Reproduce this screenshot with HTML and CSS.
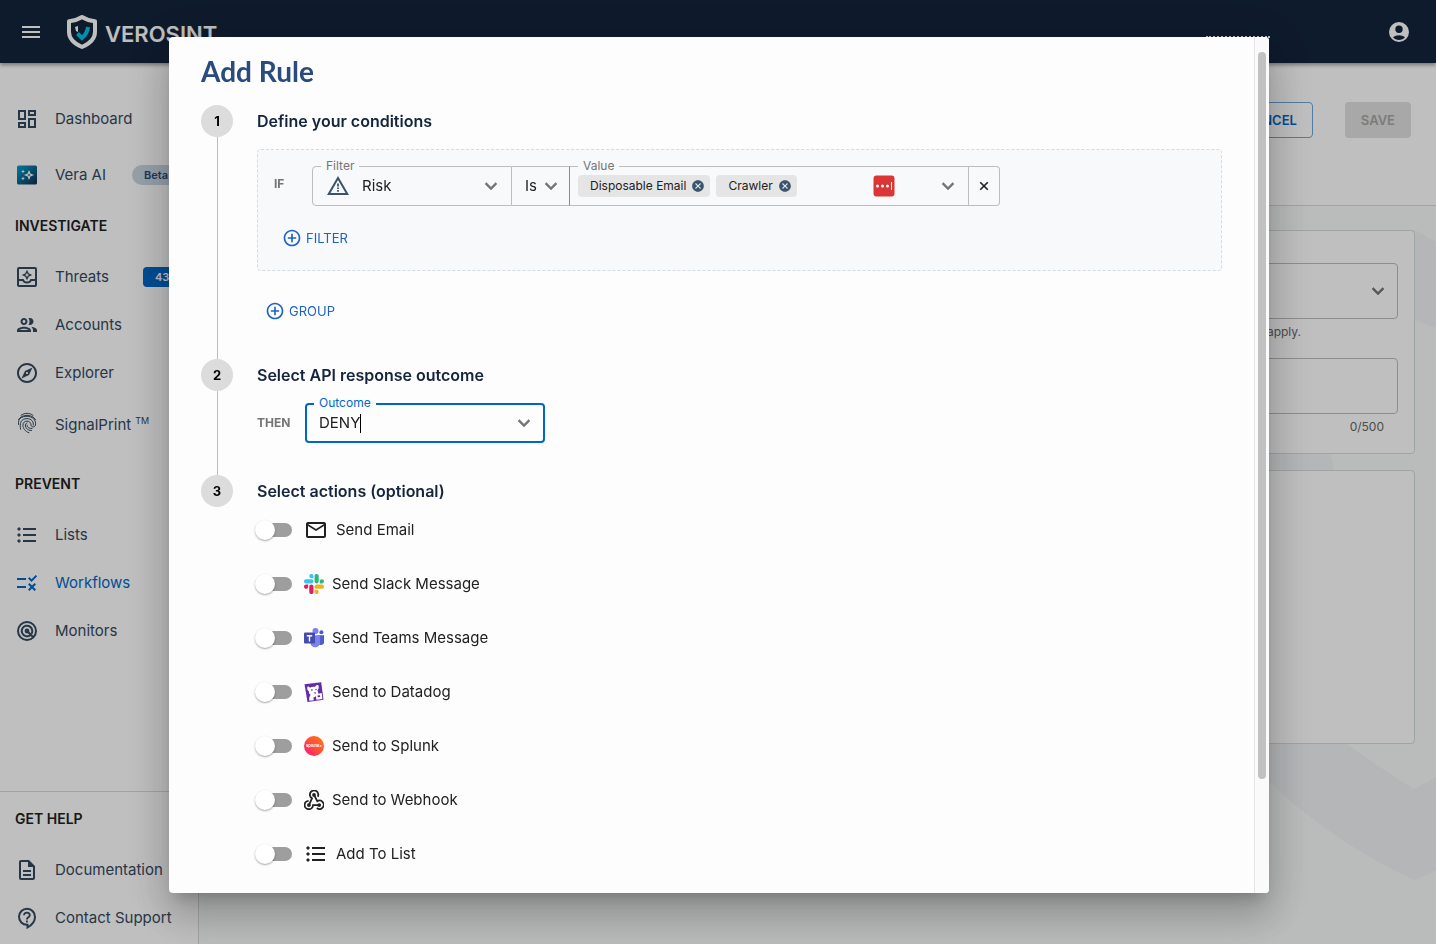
FILE: index.html
```html
<!DOCTYPE html>
<html lang="en">
<head>
    <meta charset="UTF-8">
    <meta name="viewport" content="width=device-width, initial-scale=1.0">
    <title>Verosint - Workflows</title>
    <link rel="stylesheet" href="styles.css">
</head>
<body>
    <!-- shared icons -->
    <svg class="sprite" aria-hidden="true">
        <symbol id="chevron" viewBox="0 0 24 24"><path d="M7.41 8.59 12 13.17l4.59-4.58L18 10l-6 6-6-6z" fill="currentColor" stroke="currentColor" stroke-width=".5"/></symbol>
        <symbol id="plus-circle" viewBox="0 0 24 24"><path d="M13 7h-2v4H7v2h4v4h2v-4h4v-2h-4V7zm-1-5C6.48 2 2 6.48 2 12s4.48 10 10 10 10-4.48 10-10S17.52 2 12 2zm0 18c-4.41 0-8-3.59-8-8s3.59-8 8-8 8 3.59 8 8-3.59 8-8 8z" fill="currentColor"/></symbol>
        <symbol id="close-circle" viewBox="0 0 24 24"><path d="M12 2C6.47 2 2 6.47 2 12s4.47 10 10 10 10-4.47 10-10S17.53 2 12 2zm5 13.59L15.59 17 12 13.41 8.41 17 7 15.59 10.59 12 7 8.41 8.41 7 12 10.59 15.59 7 17 8.41 13.41 12 17 15.59z" fill="currentColor"/></symbol>
        <symbol id="list" viewBox="0 0 24 24"><path d="M8 5h13v2H8zM8 11h13v2H8zM8 17h13v2H8z" fill="currentColor"/><path d="M4 4.2 5.8 6 4 7.8 2.200 6zM4 10.200 5.800 12 4 13.800 2.200 12zM4 16.200 5.800 18 4 19.800 2.200 18z" fill="currentColor" stroke="currentColor" stroke-width=".4"/></symbol>
    </svg>

    <header class="topbar">
        <button class="icon-button" type="button" aria-label="Menu">
            <svg width="24" height="24" viewBox="0 0 24 24"><path d="M3 18h18v-2H3v2zm0-5h18v-2H3v2zm0-7v2h18V6H3z" fill="currentColor"/></svg>
        </button>
        <a class="brand" href="#">
            <svg width="30" height="34" viewBox="0 0 30 34">
                <path d="M15 2C11 4.500 7 6 2 6.200V17c0 6.500 5 11.500 13 15 8-3.500 13-8.500 13-15V6.200C23 6 19 4.500 15 2z" fill="none" stroke="#fff" stroke-width="4" stroke-linejoin="round"/>
                <path d="M8 12c1-.2 2-.6 3-1v6l-2-1z" fill="#fff"/>
                <path d="M10.500 18.500l4.500 4.500c3.500-3 5.500-6 6-11" fill="none" stroke="#00bfe8" stroke-width="4"/>
            </svg>
            <span>VEROSINT</span>
        </a>
        <span class="workspace"></span>
        <button class="icon-button" type="button" aria-label="Account">
            <svg width="24" height="24" viewBox="0 0 24 24"><path fill-rule="evenodd" d="M12 2a10 10 0 1 0 0 20 10 10 0 0 0 0-20zm0 3.500a3.700 3.700 0 1 1 0 7.400 3.700 3.700 0 0 1 0-7.400zM12 20c-2.400 0-4.500-1-6-2.700 1.500-1.300 3.700-2 6-2s4.500.7 6 2C16.500 19 14.400 20 12 20z" fill="currentColor"/></svg>
        </button>
    </header>

    <div class="layout">
        <nav class="sidebar">
            <a class="nav-item nav-top" href="#">
                <svg width="24" height="24" viewBox="0 0 24 24"><path d="M19 5v2h-4V5h4M9 5v6H5V5h4m10 8v6h-4v-6h4M9 17v2H5v-2h4M21 3h-8v6h8V3zM11 3H3v10h8V3zm10 8h-8v10h8V11zm-10 4H3v6h8v-6z" fill="currentColor"/></svg>
                Dashboard
            </a>
            <a class="nav-item" href="#">
                <svg width="24" height="24" viewBox="0 0 24 24">
                    <defs><linearGradient id="vera" x1="0" y1="0" x2="1" y2="1"><stop offset="0" stop-color="#00a3cf"/><stop offset="1" stop-color="#16294f"/></linearGradient></defs>
                    <rect x="2" y="2.500" width="20" height="19" rx="1.500" fill="url(#vera)"/>
                    <path d="M14 8.500l1 2.500 2.500 1-2.500 1-1 2.500-1-2.500-2.500-1 2.500-1z" fill="none" stroke="#fff" stroke-width="1.200"/>
                    <path d="M8 6.500l.6 1.400 1.400.6-1.400.6L8 10.500l-.6-1.400L6 8.500l1.400-.6zM8 13.500l.6 1.400 1.400.6-1.400.6L8 17.500l-.6-1.400-1.400-.6 1.400-.6z" fill="#fff"/>
                </svg>
                Vera AI
                <span class="tag">Beta</span>
            </a>

            <h2 class="nav-heading">INVESTIGATE</h2>
            <a class="nav-item" href="#">
                <svg width="24" height="24" viewBox="0 0 24 24" fill="none" stroke="currentColor" stroke-width="2"><rect x="3" y="3" width="18" height="18" rx="1"/><path d="M3 15h5c.7 1.800 2 2.600 4 2.600s3.300-.8 4-2.600h5"/><path d="M12 6.300l1.200 2.500 2.500 1.200-2.500 1.200-1.200 2.500-1.200-2.500L8.300 10l2.500-1.200z" stroke-width="1.400"/></svg>
                Threats
                <span class="count">43</span>
            </a>
            <a class="nav-item" href="#">
                <svg width="24" height="24" viewBox="0 0 24 24"><path d="M9 13.750c-2.340 0-7 1.170-7 3.500V19h14v-1.750c0-2.330-4.660-3.500-7-3.500zM4.340 17c.84-.58 2.870-1.250 4.660-1.250s3.820.67 4.660 1.250H4.340zM9 12c1.930 0 3.500-1.570 3.500-3.500S10.930 5 9 5 5.500 6.570 5.500 8.500 7.070 12 9 12zm0-5c.83 0 1.500.67 1.500 1.500S9.830 10 9 10s-1.500-.67-1.500-1.500S8.170 7 9 7zm7.040 6.810c1.160.84 1.960 1.960 1.960 3.440V19h4v-1.750c0-2.020-3.500-3.170-5.960-3.440zM15 12c1.930 0 3.500-1.570 3.500-3.500S16.930 5 15 5c-.54 0-1.040.13-1.500.35.63.89 1 1.980 1 3.150s-.37 2.260-1 3.150c.46.22.96.35 1.500.35z" fill="currentColor"/></svg>
                Accounts
            </a>
            <a class="nav-item" href="#">
                <svg width="24" height="24" viewBox="0 0 24 24"><path d="M12 2C6.480 2 2 6.480 2 12s4.480 10 10 10 10-4.480 10-10S17.520 2 12 2zm0 18c-4.410 0-8-3.590-8-8s3.590-8 8-8 8 3.590 8 8-3.590 8-8 8zm-5.500-2.500l7.510-3.490L17.500 6.500 9.990 9.990 6.500 17.500zm5.500-6.600c.61 0 1.100.49 1.100 1.100s-.49 1.100-1.100 1.100-1.100-.49-1.100-1.100.49-1.100 1.100-1.100z" fill="currentColor"/></svg>
                Explorer
            </a>
            <a class="nav-item nav-tall" href="#">
                <svg width="24" height="24" viewBox="0 0 24 24" fill="none" stroke="currentColor" stroke-width="1" stroke-linecap="round">
                    <path d="M6 4.300C9.500 1.600 14.500 1.600 18 4.300M3.500 8.500C7 2.800 17 2.800 20.500 8.500M3.600 13.500C2.500 7.500 7 5.300 12 5.300s9.500 3.500 8.400 8.900c-.6 2.300-4 2.300-4.300 0-.3-5.500-8.200-5.400-8.200 0 .1 3 2.200 6.500 6 7.500M5.600 18.200C4.200 12.500 6 7.600 12 7.600c4.500 0 7 3.500 6.300 6.500M12 11.900c-3.500 1-1.500 8 4.500 7.600M12 14.200c.2 2 2 3.500 5 3.300"/>
                </svg>
                <span>SignalPrint<sup>TM</sup></span>
            </a>

            <h2 class="nav-heading">PREVENT</h2>
            <a class="nav-item" href="#">
                <svg width="24" height="24"><use href="#list"/></svg>
                Lists
            </a>
            <a class="nav-item active" href="#">
                <svg width="24" height="24" viewBox="0 0 24 24"><path d="M16.540 11L13 7.460l1.410-1.410 2.120 2.120 4.240-4.240 1.410 1.410L16.540 11zM11 7H2v2h9V7zM21 13.410L19.590 12 17 14.590 14.410 12 13 13.410 15.590 16 13 18.590 14.410 20 17 17.410 19.590 20 21 18.590 18.410 16 21 13.410zM11 15H2v2h9v-2z" fill="currentColor"/></svg>
                Workflows
            </a>
            <a class="nav-item" href="#">
                <svg width="24" height="24" viewBox="0 0 24 24" fill="none" stroke="currentColor" stroke-width="2"><circle cx="12" cy="12" r="9"/><path d="M15.200 16.200A5.300 5.300 0 1 1 17.300 12c0 1-.3 2-.8 2.800M12 12l6.500 6.500"/><circle cx="12" cy="12" r="1.400"/></svg>
                Monitors
            </a>

            <div class="nav-help">
                <h2 class="nav-heading">GET HELP</h2>
                <a class="nav-item" href="#">
                    <svg width="24" height="24" viewBox="0 0 24 24"><path d="M8 16h8v2H8zm0-4h8v2H8zm6-10H6c-1.100 0-2 .9-2 2v16c0 1.100.890 2 1.990 2H18c1.100 0 2-.9 2-2V8l-6-6zm4 18H6V4h7v5h5v11z" fill="currentColor"/></svg>
                    Documentation
                </a>
                <a class="nav-item" href="#">
                    <svg width="24" height="24" viewBox="0 0 24 24" fill="none" stroke="currentColor" stroke-width="2"><path d="M12.500 18.800V21.500C17 19 20 15.200 20 11A8 8 0 1 0 12 18.800z"/><path d="M9 9.300c0-3.600 5.800-3.500 5.800 0 0 2-2.900 2.100-2.900 4.100M11.900 14.500v2" stroke-width="1.800"/></svg>
                    Contact Support
                </a>
            </div>
        </nav>

        <main class="page">
            <div class="page-toolbar">
                <button class="button outlined" type="button">CANCEL</button>
                <button class="button disabled" type="button" disabled>SAVE</button>
            </div>
            <div class="page-body">
                <svg class="watermark" width="246" height="738" viewBox="1190 206 246 738" aria-hidden="true"><path d="M1436 242 1415 230Q1300 260 1200 330V600Q1215 745 1269 782Q1333 842 1414 880L1436 871V777L1414 789Q1380 768 1347 744Q1340 500 1331 454L1332 360Q1370 320 1415 320L1436 328z"/></svg>
                <section class="card">
                    <select class="field" aria-label="Workflow type"><option></option></select>
                    <svg class="field-arrow" width="24" height="24"><use href="#chevron"/></svg>
                    <p class="hint">Select the event type to which this workflow will apply.</p>
                    <input class="field" type="text" aria-label="Description">
                    <p class="hint counter">0/500</p>
                </section>
                <section class="card card-rules"></section>
            </div>
        </main>
    </div>

    <div class="backdrop">
        <div class="modal" role="dialog" aria-labelledby="modal-title">
            <form class="modal-content">
                <h1 id="modal-title">Add Rule</h1>

                <div class="step">
                    <div class="rail"><span class="step-number">1</span></div>
                    <div class="step-body">
                        <h2>Define your conditions</h2>
                        <div class="group">
                            <div class="condition">
                                <span class="keyword">IF</span>
                                <div class="combo combo-filter">
                                    <label for="filter">Filter</label>
                                    <svg width="24" height="24" viewBox="0 0 24 24"><path d="M12 5.990 19.530 19H4.470L12 5.990M12 2 1 21h22L12 2z" fill="currentColor"/><path d="M11.100 9.500h1.800v3h-1.800zM11.100 13.500h1.800v1.500h-1.800zM11.100 16h1.800v1.800h-1.800z" fill="currentColor"/></svg>
                                    <select id="filter"><option>Risk</option></select>
                                    <svg class="arrow" width="24" height="24"><use href="#chevron"/></svg>
                                </div>
                                <div class="combo combo-operator">
                                    <select aria-label="Operator"><option>Is</option></select>
                                    <svg class="arrow" width="24" height="24"><use href="#chevron"/></svg>
                                </div>
                                <div class="combo combo-value">
                                    <label for="value">Value</label>
                                    <span class="chip">Disposable Email<button type="button" aria-label="Remove Disposable Email"><svg width="14" height="14"><use href="#close-circle"/></svg></button></span>
                                    <span class="chip">Crawler<button type="button" aria-label="Remove Crawler"><svg width="14" height="14"><use href="#close-circle"/></svg></button></span>
                                    <input id="value" type="text">
                                    <svg width="22" height="22" viewBox="0 0 22 22"><rect x=".5" y=".5" width="21" height="21" rx="3" fill="#dc3535"/><g fill="#fff"><circle cx="4.500" cy="11" r="1.500"/><circle cx="9.500" cy="11" r="1.500"/><circle cx="14.500" cy="11" r="1.500"/><path d="M18 7h1v8h-1z"/></g></svg>
                                    <svg class="arrow" width="24" height="24"><use href="#chevron"/></svg>
                                </div>
                                <button class="remove" type="button" aria-label="Remove filter">
                                    <svg width="14" height="14" viewBox="0 0 24 24"><path d="M5.500 5.500l13 13M18.500 5.500l-13 13" stroke="currentColor" stroke-width="2.800"/></svg>
                                </button>
                            </div>
                            <button class="link-button" type="button"><svg width="20" height="20"><use href="#plus-circle"/></svg>FILTER</button>
                        </div>
                        <button class="link-button" type="button"><svg width="20" height="20"><use href="#plus-circle"/></svg>GROUP</button>
                    </div>
                </div>

                <div class="step">
                    <div class="rail"><span class="step-number">2</span></div>
                    <div class="step-body">
                        <h2>Select API response outcome</h2>
                        <div class="outcome">
                            <span class="keyword">THEN</span>
                            <div class="combo combo-outcome">
                                <label for="outcome">Outcome</label>
                                <input id="outcome" type="text" value="DENY">
                                <span class="caret"></span>
                                <svg class="arrow" width="24" height="24"><use href="#chevron"/></svg>
                            </div>
                        </div>
                    </div>
                </div>

                <div class="step">
                    <div class="rail"><span class="step-number">3</span></div>
                    <div class="step-body">
                        <h2>Select actions (optional)</h2>
                        <div class="actions">
                            <label class="action"><input type="checkbox" role="switch">
                                <svg width="24" height="24" viewBox="0 0 24 24"><path d="M22 6c0-1.100-.9-2-2-2H4c-1.100 0-2 .9-2 2v12c0 1.100.9 2 2 2h16c1.100 0 2-.9 2-2V6zm-2 0-8 5-8-5h16zm0 12H4V8l8 5 8-5v10z" fill="currentColor"/></svg>
                                Send Email</label>
                            <label class="action"><input type="checkbox" role="switch">
                                <svg width="20" height="20" viewBox="0 0 122.800 122.800"><path d="M25.800 77.600c0 7.100-5.800 12.900-12.900 12.900S0 84.700 0 77.600s5.800-12.900 12.900-12.900h12.900v12.900zm6.500 0c0-7.100 5.800-12.900 12.900-12.900s12.900 5.800 12.900 12.900v32.300c0 7.100-5.800 12.900-12.900 12.900s-12.900-5.800-12.900-12.900V77.600z" fill="#e01e5a"/><path d="M45.200 25.800c-7.100 0-12.900-5.800-12.900-12.900S38.100 0 45.200 0s12.900 5.800 12.900 12.900v12.900H45.200zm0 6.500c7.100 0 12.900 5.800 12.900 12.900s-5.800 12.900-12.900 12.900H12.900C5.800 58.100 0 52.300 0 45.200s5.800-12.900 12.900-12.900h32.300z" fill="#36c5f0"/><path d="M97 45.200c0-7.100 5.800-12.900 12.900-12.900s12.900 5.800 12.900 12.900-5.800 12.900-12.900 12.900H97V45.200zm-6.500 0c0 7.100-5.800 12.900-12.900 12.900s-12.900-5.800-12.900-12.900V12.900C64.700 5.800 70.500 0 77.600 0s12.900 5.800 12.900 12.900v32.300z" fill="#2eb67d"/><path d="M77.600 97c7.100 0 12.900 5.800 12.900 12.900s-5.800 12.900-12.900 12.900-12.900-5.800-12.900-12.900V97h12.900zm0-6.500c-7.100 0-12.900-5.800-12.900-12.900s5.800-12.900 12.900-12.900h32.300c7.100 0 12.900 5.800 12.900 12.900s-5.800 12.900-12.900 12.900H77.600z" fill="#ecb22e"/></svg>
                                Send Slack Message</label>
                            <label class="action"><input type="checkbox" role="switch">
                                <svg width="20" height="20" viewBox="0 0 20 20"><circle cx="17.400" cy="4.200" r="2" fill="#5059c9"/><path d="M14 7.200h6v6.300a3 3 0 0 1-6 1z" fill="#5059c9"/><circle cx="11.500" cy="3" r="3" fill="#7b83eb"/><path d="M6.500 7.200h9.700v7.600a5 5 0 0 1-9.700 1z" fill="#7b83eb"/><rect y="4.500" width="11" height="11" rx="1" fill="#444cb0"/><path d="M2.800 7h5.400v1.400H6.200v5H4.800v-5h-2z" fill="#fff"/></svg>
                                Send Teams Message</label>
                            <label class="action"><input type="checkbox" role="switch">
                                <svg width="20" height="20" viewBox="0 0 20 20"><path d="M.5 2.200 17.200.2 19.500 17.800 3.500 20z" fill="#632ca6"/><path d="M3.500 4.500c1.500 0 2 .5 2.500 1.200 1.500-1 3.500-1 5-.7.500-1.500 2.500-2.500 3.500-1.500.5 2 .2 3.500-1 5l1 3.200 3.200-.6.700 5.800-6 .8-.5-3.500-2.600 1.500.6 2.600-4.500.5c-.7-2.500 0-4.500 1.400-6-1.700-.5-2-2-1.800-3.300C3.500 8.500 2.700 6.500 3.500 4.500z" fill="#fff"/><path d="M7 7.500l1.500-.3.200 1.300-1.500.2zM11.300 7l1.200-.2.200 1.300-1.200.1zM9.500 10.800l2.500-.6-.5 1.800zM13.500 13.500l2.500-.3.200 1.700-2.500.3z" fill="#632ca6"/></svg>
                                Send to Datadog</label>
                            <label class="action"><input type="checkbox" role="switch">
                                <svg width="20" height="20" viewBox="0 0 20 20"><defs><linearGradient id="splunk" x1="0" y1="1" x2="1" y2="0"><stop offset="0" stop-color="#ff0f8c"/><stop offset=".45" stop-color="#ff4b3a"/><stop offset="1" stop-color="#ff7a1a"/></linearGradient></defs><circle cx="10" cy="10" r="10" fill="url(#splunk)"/><text class="splunk-name" x="10" y="11" text-anchor="middle">splunk&gt;</text></svg>
                                Send to Splunk</label>
                            <label class="action"><input type="checkbox" role="switch">
                                <svg width="20" height="20" viewBox="0 0 20 20" fill="none" stroke="currentColor" stroke-width="1.800"><path d="M13.700 6.800A4.200 4.200 0 1 0 8 8.300L5 14.800"/><path d="M4.600 10.800A4.200 4.200 0 1 0 9 15.200h6.300"/><path d="M10 4.800l3.300 6.400a4.200 4.200 0 1 1-.5 6.800"/><g fill="currentColor" stroke="none"><circle cx="10" cy="4.900" r="1.900"/><circle cx="4.900" cy="15.100" r="1.900"/><circle cx="15.200" cy="15.100" r="1.900"/></g></svg>
                                Send to Webhook</label>
                            <label class="action"><input type="checkbox" role="switch">
                                <svg width="24" height="24"><use href="#list"/></svg>
                                Add To List</label>
                        </div>
                    </div>
                </div>
            </form>
            <div class="scrollbar"><div class="thumb"></div></div>
        </div>
    </div>
</body>
</html>
```
FILE: styles.css
```css
* {
    box-sizing: border-box;
}

body {
    margin: 0;
    height: 100vh;
    display: flex;
    flex-direction: column;
    overflow: hidden;
    font-family: Inter, "Liberation Sans", sans-serif;
    font-size: 15px;
    line-height: 24px;
    color: #212121;
    background-color: #f7fbf9;
}

h1, h2, p {
    margin: 0;
}

a {
    color: inherit;
    text-decoration: none;
}

button, input, select {
    font: inherit;
    color: inherit;
}

button {
    padding: 0;
    border: none;
    background: none;
    cursor: pointer;
}

svg {
    flex-shrink: 0;
}

.sprite {
    position: absolute;
    width: 0;
    height: 0;
}

/* top bar */
.topbar {
    position: relative;
    z-index: 1;
    display: flex;
    align-items: center;
    flex-shrink: 0;
    height: 63px;
    padding: 0 25px 0 19px;
    color: #fff;
    background-color: #13243c;
    box-shadow: 0 2px 4px rgba(0, 0, 0, 0.4);
}

.icon-button {
    display: flex;
}

.brand {
    display: flex;
    align-items: center;
    gap: 8px;
    margin-left: 24px;
    font-size: 22px;
    font-weight: 600;
}

.brand span {
    padding-top: 4px;
}

.workspace {
    width: 64px;
    height: 2px;
    margin: 10px 117px 0 auto;
    border-top: 2px dotted #fff;
}

/* layout */
.layout {
    display: flex;
    flex: 1;
    min-height: 0;
}

.sidebar {
    display: flex;
    flex-direction: column;
    flex-shrink: 0;
    width: 199px;
    padding: 32px 0 2px;
    border-right: 1px solid #d5dbdb;
    background-color: #fff;
}

.nav-item {
    display: flex;
    align-items: center;
    gap: 16px;
    height: 48px;
    padding-left: 15px;
    color: #34495e;
    white-space: nowrap;
}

.nav-top {
    margin-bottom: 8px;
}

.nav-tall {
    height: 52px;
    margin-bottom: 8px;
}

.nav-item.active {
    color: #0067c8;
}

.nav-item sup {
    margin-left: 4px;
    font-size: 9px;
    line-height: 24px;
    vertical-align: 6px;
}

.nav-heading {
    padding-left: 15px;
    font-size: 14px;
    font-weight: 600;
    line-height: 54px;
}

.nav-help {
    margin-top: auto;
    border-top: 1px solid #d5dbdb;
}

.tag, .count {
    height: 20px;
    padding: 0 12px;
    font-size: 11px;
    font-weight: 600;
    line-height: 20px;
}

.tag {
    margin-left: 10px;
    border-radius: 10px;
    color: #26477c;
    background-color: #c8d6e2;
}

.count {
    margin-left: 18px;
    border-radius: 4px;
    color: #fff;
    background-color: #0067c8;
}

.page {
    display: flex;
    flex-direction: column;
    flex: 1;
    min-width: 0;
}

.page-toolbar {
    display: flex;
    justify-content: flex-end;
    gap: 32px;
    padding: 39px 25px 67px;
    border-bottom: 1px solid #d5dbdb;
    background-color: #fff;
}

.button {
    height: 36px;
    padding: 0 15px;
    border: 1px solid transparent;
    border-radius: 4px;
    font-size: 13px;
    font-weight: 600;
}

.outlined {
    border-color: #6ea6de;
    color: #0067c8;
}

.disabled {
    color: #a6a6a6;
    background-color: #e0e0e0;
}

.page-body {
    position: relative;
    display: flex;
    flex-direction: column;
    gap: 16px;
    flex: 1;
    padding: 24px 21px;
    overflow: hidden;
}

.watermark {
    position: absolute;
    top: 0;
    right: 0;
    fill: #f1f3f6;
}

.card {
    position: relative;
    padding: 32px 16px 16px;
    border: 1px solid #d5dbdb;
    border-radius: 4px;
    background-color: #fff;
}

.card-rules {
    height: 274px;
}

.field {
    display: block;
    width: 100%;
    height: 56px;
    padding: 0 14px;
    border: 1px solid #bdbdbd;
    border-radius: 4px;
    background: #fff;
    appearance: none;
}

.field-arrow {
    position: absolute;
    top: 48px;
    right: 24px;
    color: #757575;
}

.hint {
    padding: 3px 14px 0;
    margin-bottom: 16px;
    font-size: 12px;
    line-height: 20px;
    color: #666;
    text-align: right;
}

.card .hint:first-of-type {
    padding-right: 97px;
}

.card .counter {
    margin-bottom: 0;
}

/* dialog */
.backdrop {
    position: fixed;
    inset: 0;
    z-index: 2;
    padding: 37px 167px 51px 169px;
    background-color: rgba(0, 0, 0, 0.25);
}

.modal {
    display: flex;
    height: 100%;
    overflow: hidden;
    border-radius: 4px;
    background-color: #fdfdfd;
    box-shadow: 0 11px 15px -7px rgba(0, 0, 0, 0.2), 0 24px 38px 3px rgba(0, 0, 0, 0.14), 0 9px 46px 8px rgba(0, 0, 0, 0.12);
}

.modal-content {
    flex: 1;
    min-width: 0;
    padding: 16px 32px 0;
    overflow: hidden;
}

.scrollbar {
    width: 15px;
    padding: 15px 3px 0;
    border-left: 1px solid #e5e5e5;
    background-color: #fafafa;
}

.thumb {
    width: 8px;
    height: calc(100% - 114px);
    border-radius: 4px;
    background-color: #c1c1c1;
}

h1 {
    margin-bottom: 16px;
    font-family: Lato, sans-serif;
    font-size: 28px;
    font-weight: 700;
    line-height: 36px;
    color: #294b7d;
}

.step {
    display: flex;
    gap: 24px;
}

.rail {
    display: flex;
    flex-direction: column;
    align-items: center;
    width: 32px;
}

.rail::after {
    content: "";
    flex: 1;
    width: 1px;
    background-color: #bdbdbd;
}

.step:last-child .rail::after {
    display: none;
}

.step-number {
    width: 32px;
    border-radius: 50%;
    font-size: 13px;
    font-weight: 700;
    line-height: 32px;
    text-align: center;
    color: #000;
    background-color: #dcdcdc;
}

.step-body {
    flex: 1;
    min-width: 0;
    padding-bottom: 32px;
}

.step-body h2 {
    font-size: 16px;
    font-weight: 600;
    line-height: 32px;
    color: #13243c;
}

.group {
    margin: 12px 0 24px;
    padding: 16px;
    border: 1px dashed #d3dce3;
    border-radius: 4px;
    background-color: #f8f9fb;
}

.condition {
    display: flex;
    margin-bottom: 16px;
}

.keyword {
    font-size: 12px;
    font-weight: 700;
    color: #757575;
}

.condition .keyword {
    width: 38px;
    line-height: 36px;
}

.combo {
    position: relative;
    display: flex;
    align-items: center;
    height: 40px;
    border: 1px solid #bdbdbd;
}

.combo label {
    position: absolute;
    top: -9px;
    left: 8px;
    padding: 0 5px;
    font-size: 12px;
    line-height: 16px;
    color: #757575;
    background-color: #f8f9fb;
}

.combo select, .combo input {
    min-width: 0;
    padding: 0;
    border: none;
    outline: none;
    background: none;
    appearance: none;
}

.arrow {
    color: #757575;
}

.combo-filter {
    gap: 12px;
    width: 200px;
    padding: 0 8px 0 13px;
    border-radius: 4px 0 0 4px;
    color: #3b536b;
}

.combo-filter select, .combo-operator select {
    flex: 1;
    color: #212121;
}

.combo-operator {
    width: 58px;
    padding: 0 6px 0 13px;
    border-left: none;
    border-right-color: #8c8c8c;
}

.combo-value {
    gap: 6px;
    width: 399px;
    padding: 0 8px;
    border-left: none;
}

.combo-value input {
    flex: 1;
}

.combo-value .arrow {
    margin-left: 35px;
}

.chip {
    display: flex;
    align-items: center;
    gap: 5px;
    height: 22px;
    padding: 0 5px 0 12px;
    border-radius: 4px;
    font-size: 12px;
    white-space: nowrap;
    background-color: #e5e5e5;
}

.chip button {
    display: flex;
    color: #3b536b;
}

.remove {
    display: flex;
    align-items: center;
    justify-content: center;
    width: 31px;
    border: 1px solid #bdbdbd;
    border-left: none;
    border-radius: 0 4px 4px 0;
}

.link-button {
    display: flex;
    align-items: center;
    gap: 4px;
    height: 32px;
    padding: 0 8px;
    font-size: 13px;
    color: #1f63c4;
}

.outcome {
    display: flex;
    align-items: center;
    margin-top: 12px;
}

.outcome .keyword {
    width: 48px;
}

.combo-outcome {
    width: 240px;
    padding: 0 7px 0 12px;
    border: 2px solid #0067c8;
    border-radius: 4px;
}

.combo-outcome label {
    top: -10px;
    left: 7px;
    color: #0067c8;
    background-color: #fdfdfd;
}

.combo-outcome input {
    field-sizing: content;
}

.combo-outcome .arrow {
    margin-left: auto;
}

.caret {
    width: 1px;
    height: 19px;
    background-color: #000;
}

.actions {
    display: flex;
    flex-direction: column;
    align-items: flex-start;
    gap: 16px;
    margin-top: 4px;
}

.action {
    display: flex;
    align-items: center;
    gap: 8px;
    height: 38px;
}

.action input {
    width: 34px;
    height: 14px;
    margin: 0 4px 0 1px;
    border-radius: 7px;
    background-color: #9e9e9e;
    appearance: none;
}

.action input::before {
    content: "";
    display: block;
    width: 20px;
    height: 20px;
    margin: -3px 0 0 -3px;
    border-radius: 50%;
    background-color: #fff;
    box-shadow: 0 1px 2px rgba(0, 0, 0, 0.35);
}

.splunk-name {
    font-size: 4px;
    font-weight: 700;
    fill: #fff;
}
```
